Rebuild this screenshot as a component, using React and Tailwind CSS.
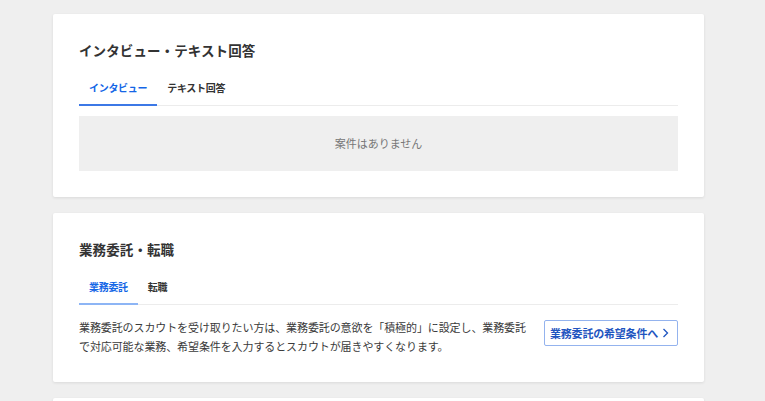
import React from "react";

const font = { fontFamily: '"Noto Sans CJK JP", "Noto Sans", sans-serif' };

function Tabs({ items, active = 0, underline = "bg-[#3c78e6]" }) {
  return (
    <div className="mt-[12px] flex border-b border-[#ececec]">
      {items.map((t, i) => (
        <div
          key={t}
          className={`relative px-[10px] pt-[8px] pb-[9px] text-[10px] leading-[16px] font-bold tracking-[-0.3px] ${
            i === active ? "text-[#1466e6]" : "text-[#333]"
          }`}
        >
          {t}
          {i === active && (
            <div className={`absolute left-0 right-0 -bottom-[1px] h-[2px] ${underline}`} />
          )}
        </div>
      ))}
    </div>
  );
}

function Card({ title, children, className = "" }) {
  return (
    <div
      className={`bg-white rounded-[2px] shadow-[0_1px_3px_rgba(0,0,0,0.09)] px-[26px] pt-[26px] pb-[26px] ${className}`}
    >
      <h2 className="text-[13.5px] leading-[20px] font-bold text-[#333] tracking-[0.1px]">{title}</h2>
      {children}
    </div>
  );
}

export default function App() {
  return (
    <div className="h-[401px] bg-[#efefef] overflow-hidden" style={font}>
      <div className="ml-[53px] w-[651px] flex flex-col gap-[16px] pt-[14px]">
        <Card title="インタビュー・テキスト回答">
          <Tabs items={["インタビュー", "テキスト回答"]} />
          <div className="mt-[10px] h-[55px] bg-[#efefef] flex items-center justify-center text-[11px] text-[#777]">
            案件はありません
          </div>
        </Card>
        <Card title="業務委託・転職">
          <Tabs items={["業務委託", "転職"]} underline="bg-[#8db5f5]" />
          <div className="mt-[13px] flex items-start justify-between gap-[16px]">
            <p className="w-[450px] text-[11px] leading-[19px] text-[#3a3a3a] tracking-[-0.1px]">
              業務委託のスカウトを受け取りたい方は、業務委託の意欲を「積極的」に設定し、業務委託で対応可能な業務、希望条件を入力するとスカウトが届きやすくなります。
            </p>
            <button className="mt-[2px] h-[26px] w-[134px] shrink-0 flex items-center justify-between pl-[5px] pr-[8px] border border-[#94b3ee] rounded-[2px] bg-white text-[11px] font-bold text-[#1f55c0] tracking-[-0.2px]">
              <span>業務委託の希望条件へ</span>
              <svg width="7" height="10" viewBox="0 0 7 10" fill="none">
                <path d="M1.5 1l4 4-4 4" stroke="#1f55c0" strokeWidth="1.3" />
              </svg>
            </button>
          </div>
        </Card>
        <Card title="" className="h-[100px]" />
      </div>
    </div>
  );
}
